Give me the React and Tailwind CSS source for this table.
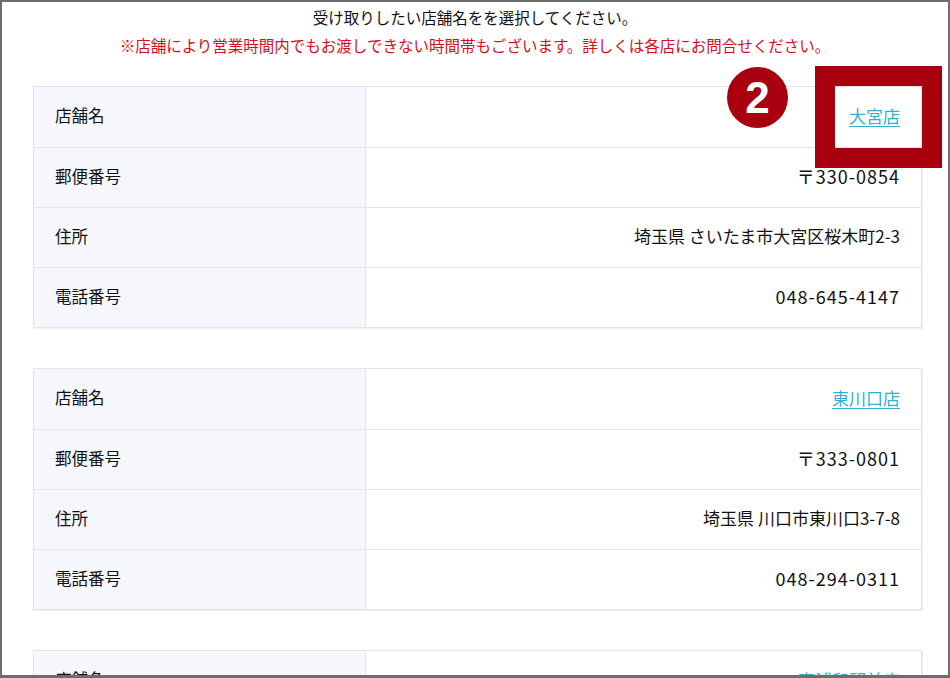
import React from "react";

const JP = { fontFamily: '"Noto Sans CJK JP", "Noto Sans", sans-serif' };

function Row({ label, children, first }) {
  return (
    <div className={"flex h-[60px] " + (first ? "" : "border-t border-[#e4e4e4]")}>
      <div className="w-[332px] shrink-0 bg-[#f5f7fd] border-r border-[#e4e4e4] flex items-center pl-[21px] pb-[3px] text-[16.5px] text-[#111]">
        {label}
      </div>
      <div className="flex-1 flex items-center justify-end pr-[21px] pb-[3px] text-[17px] text-[#111]">
        {children}
      </div>
    </div>
  );
}

function StoreTable({ name, zip, addr, tel, highlight }) {
  return (
    <div className="relative border border-[#e2e2e2] shadow-[1px_1px_1px_rgba(0,0,0,0.06)] bg-white">
      <Row label="店舗名" first>
        <a href="#" className="text-[#2fb2d0] underline underline-offset-[3px] decoration-1">{name}</a>
      </Row>
      <Row label="郵便番号">
        <span className="text-[18px] tracking-[1px]">{zip}</span>
      </Row>
      <Row label="住所">{addr}</Row>
      <Row label="電話番号">
        <span className="text-[18px] tracking-[1px]">{tel}</span>
      </Row>
      {highlight && (
        <>
          <div className="absolute left-[693px] top-[-20px] w-[61px] h-[61px] rounded-full bg-[#a8000f] flex items-center justify-center text-white text-[44px] font-bold leading-none" style={{ fontFamily: '"Liberation Sans", Arial, sans-serif' }}>
            2
          </div>
          <div className="absolute left-[781px] top-[-21px] w-[127px] h-[102px] border-[20px] border-[#a8000f]" />
        </>
      )}
    </div>
  );
}

export default function App() {
  return (
    <div className="w-[950px] h-[678px] overflow-hidden border-2 border-b-[3px] border-[#6d6d6d] bg-white box-border" style={JP}>
      <div className="text-center text-[15.5px] leading-[28px] text-[#111] pt-[1px]">
        受け取りしたい店舗名をを選択してください。
      </div>
      <div className="text-center text-[15.5px] leading-[28px] text-[#d3101e]">
        ※店舗により営業時間内でもお渡しできない時間帯もございます。詳しくは各店にお問合せください。
      </div>
      <div className="pl-[31px] pr-[26px] pt-[27px] flex flex-col gap-[40px]">
        <StoreTable name="大宮店" zip="〒330-0854" addr="埼玉県 さいたま市大宮区桜木町2-3" tel="048-645-4147" highlight />
        <StoreTable name="東川口店" zip="〒333-0801" addr="埼玉県 川口市東川口3-7-8" tel="048-294-0311" />
        <StoreTable name="東浦和駅前店" zip="〒336-0926" addr="埼玉県 さいたま市緑区東浦和1-1" tel="048-000-0000" />
      </div>
    </div>
  );
}
